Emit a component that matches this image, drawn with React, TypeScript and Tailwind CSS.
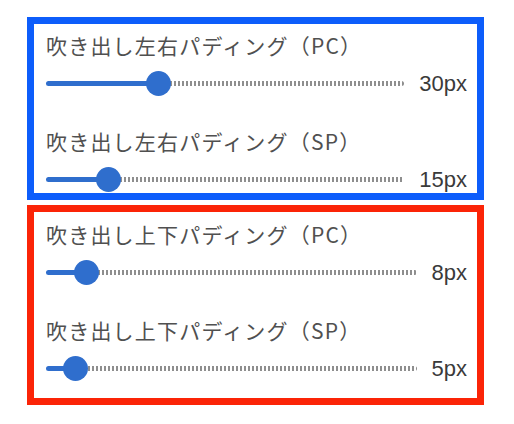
import type { CSSProperties } from 'react';

type Setting = {
  label: string;
  value: number;
};

const MAX = 100;
const THUMB = 25;

const horizontal: Setting[] = [
  { label: '吹き出し左右パディング（PC）', value: 30 },
  { label: '吹き出し左右パディング（SP）', value: 15 },
];

const vertical: Setting[] = [
  { label: '吹き出し上下パディング（PC）', value: 8 },
  { label: '吹き出し上下パディング（SP）', value: 5 },
];

function RangeRow({ label, value }: Setting) {
  const ratio = value / MAX;
  const center = `calc(${THUMB / 2}px + ${ratio} * (100% - ${THUMB}px))`;
  const filled: CSSProperties = { width: center };
  const rest: CSSProperties = { left: center };
  const thumb: CSSProperties = { left: `calc(${center} - ${THUMB / 2}px)` };

  return (
    <div className="flex flex-col gap-[12px]">
      <p className="text-[21px] leading-[28px] tracking-[1.2px] text-[#505050] font-['Noto_Sans_CJK_JP',sans-serif]">
        {label}
      </p>
      <div className="flex items-center gap-[15px]">
        <div className="relative h-[26px] flex-1">
          <div
            className="absolute left-0 top-[10px] h-[5px] rounded-full bg-[#2f6ecd]"
            style={filled}
          />
          <div
            className="absolute right-0 top-[10px] h-[5px] rounded-r-full bg-[repeating-linear-gradient(90deg,#8e8e8e_0_2px,transparent_2px_4px)]"
            style={rest}
          />
          <div
            className="absolute top-0 h-[25px] w-[25px] rounded-full bg-[#2f6ecd]"
            style={thumb}
          />
        </div>
        <span className="text-[22px] leading-[26px] text-[#3a3a3a] font-['Liberation_Sans',sans-serif]">
          {value}px
        </span>
      </div>
    </div>
  );
}

export default function App() {
  return (
    <div className="min-h-screen bg-white pl-[27px] pt-[17px]">
      <div className="flex w-[457px] flex-col gap-[5px]">
        <section className="flex flex-col gap-[30px] border-[7px] border-[#0d5dfb] pb-[0px] pl-[12px] pr-[10px] pt-[7px]">
          {horizontal.map((s) => (
            <RangeRow key={s.label} {...s} />
          ))}
        </section>
        <section className="flex flex-col gap-[30px] border-[7px] border-[#fb2407] pb-[16px] pl-[12px] pr-[10px] pt-[8px]">
          {vertical.map((s) => (
            <RangeRow key={s.label} {...s} />
          ))}
        </section>
      </div>
    </div>
  );
}
